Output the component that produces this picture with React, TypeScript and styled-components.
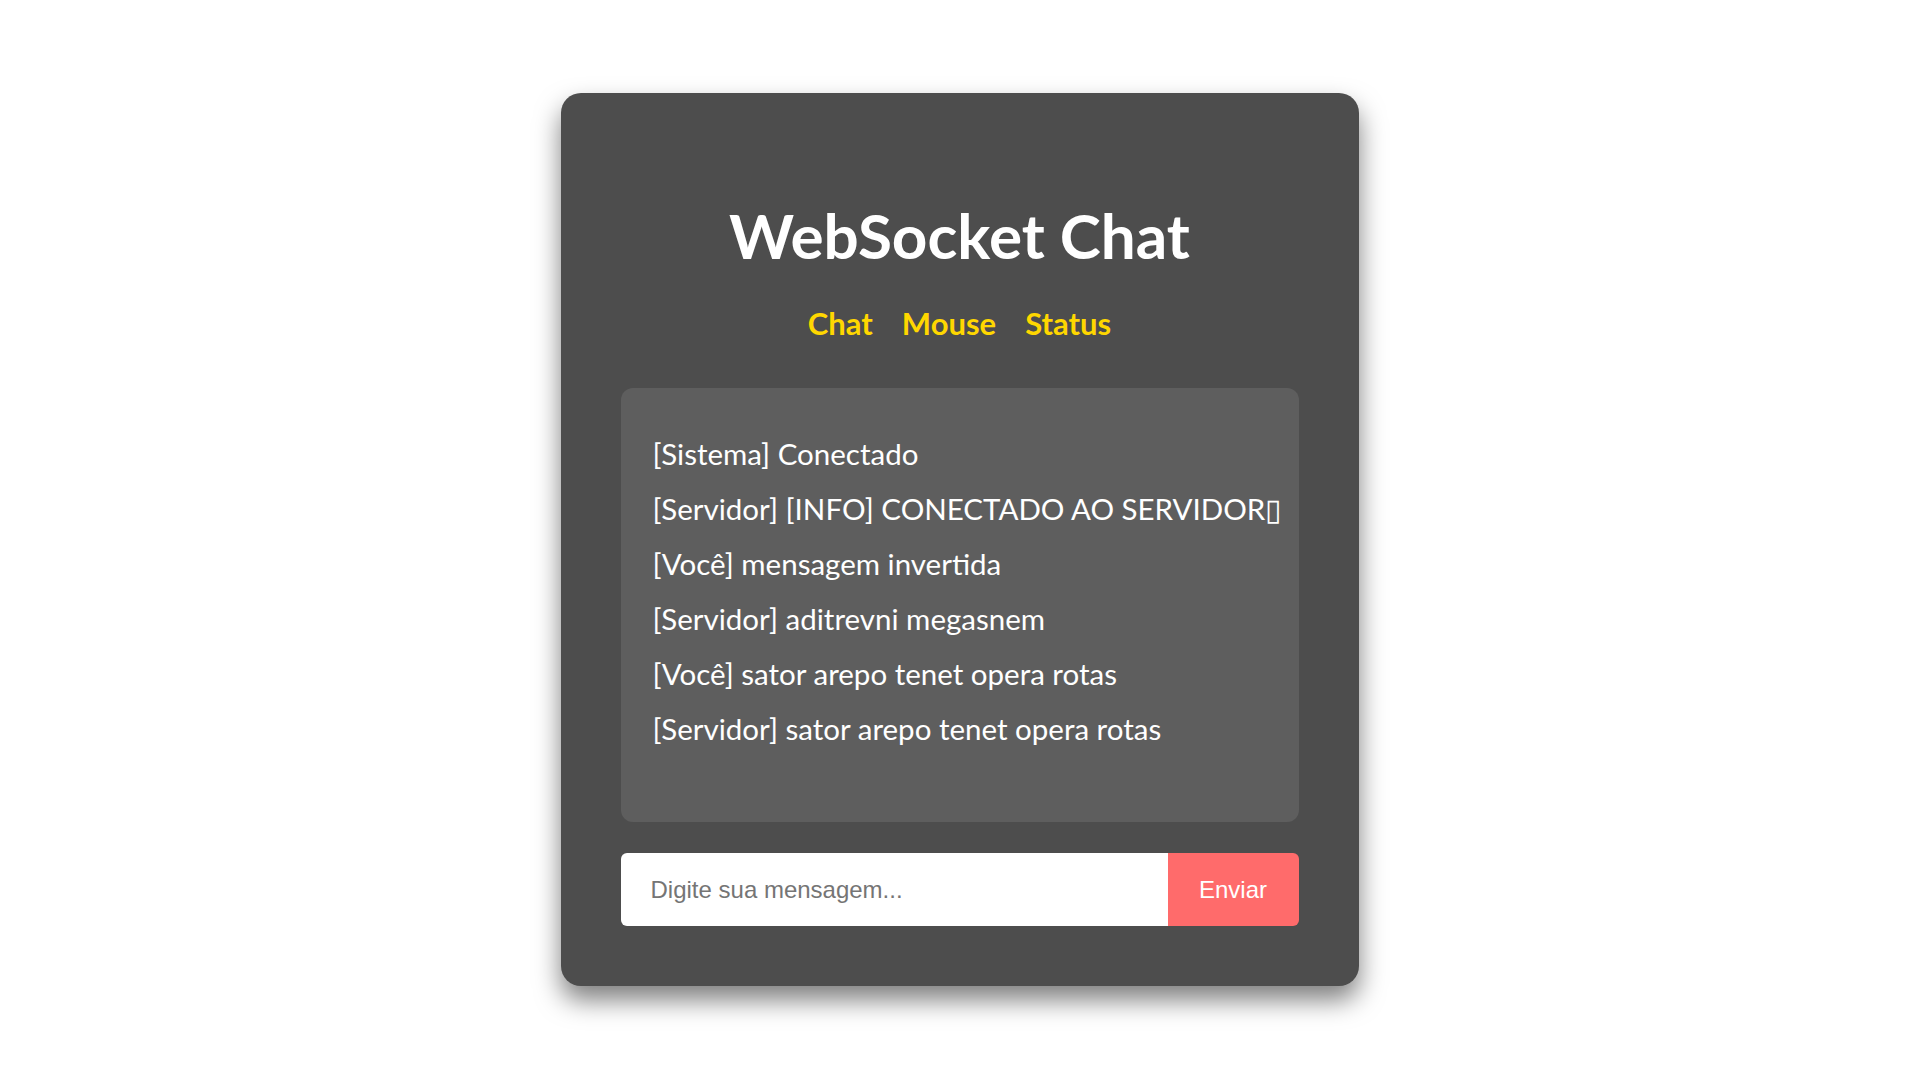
import React from 'react';
import styled, {createGlobalStyle} from "styled-components";

const messages = [
    {from: "Sistema", text: "Conectado"},
    {from: "Servidor", text: "[INFO] CONECTADO AO SERVIDOR\u25AF"},
    {from: "Você", text: "mensagem invertida"},
    {from: "Servidor", text: "aditrevni megasnem"},
    {from: "Você", text: "sator arepo tenet opera rotas"},
    {from: "Servidor", text: "sator arepo tenet opera rotas"},
];

const tabs = ["Chat", "Mouse", "Status"];

export default function App() {
    return (
        <>
            <GlobalStyle/>
            <StyledPage>
                <Card>
                    <Title>WebSocket Chat</Title>
                    <Nav>
                        {tabs.map(tab => <NavLink key={tab} href="#">{tab}</NavLink>)}
                    </Nav>
                    <MessageBox>
                        {messages.map((m, i) => (
                            <Message key={i}>[{m.from}] {m.text}</Message>
                        ))}
                    </MessageBox>
                    <InputRow>
                        <MessageInput autoFocus placeholder="Digite sua mensagem..."/>
                        <SendButton>Enviar</SendButton>
                    </InputRow>
                </Card>
            </StyledPage>
        </>
    );
}

const GlobalStyle = createGlobalStyle`
  * {
    box-sizing: border-box;
  }

  body {
    margin: 0;
    background: #ffffff;
    font-family: Lato, "Open Sans", sans-serif;
  }
`

const StyledPage = styled.main`
  min-height: 100vh;
  display: flex;
  align-items: center;
  justify-content: center;
`

const Card = styled.section`
  width: 798px;
  padding: 60px;
  background: #4d4d4d;
  border-radius: 20px;
  box-shadow: 0 14px 26px rgba(0, 0, 0, 0.5);
  display: flex;
  flex-direction: column;
`

const Title = styled.h1`
  margin: 46px 0 0;
  color: #ffffff;
  font-size: 62px;
  line-height: 72px;
  font-weight: 700;
  text-align: center;
`

const Nav = styled.nav`
  margin: 35px 0 47px;
  display: flex;
  justify-content: center;
  gap: 29px;
`

const NavLink = styled.a`
  color: #ffd700;
  font-size: 31px;
  line-height: 35px;
  font-weight: 700;
  text-decoration: none;
`

const MessageBox = styled.div`
  height: 434px;
  padding: 47px 32px;
  background: #5e5e5e;
  border-radius: 12px;
  display: flex;
  flex-direction: column;
  gap: 18px;
`

const Message = styled.p`
  margin: 0;
  color: #ffffff;
  font-size: 29.5px;
  line-height: 37px;
  white-space: nowrap;
`

const InputRow = styled.div`
  margin-top: 31px;
  height: 73px;
  display: flex;
`

const MessageInput = styled.input`
  flex: 1;
  min-width: 0;
  padding: 0 30px;
  border: none;
  outline: none;
  border-radius: 6px 0 0 6px;
  background: #ffffff;
  font-family: "Liberation Sans", Arial, sans-serif;
  font-size: 24px;
  color: #222222;

  &::placeholder {
    color: #757575;
  }
`

const SendButton = styled.button`
  width: 131px;
  border: none;
  border-radius: 0 6px 6px 0;
  background: #ff6b6b;
  color: #ffffff;
  font-family: "Liberation Sans", Arial, sans-serif;
  font-size: 24px;
  cursor: pointer;
`
